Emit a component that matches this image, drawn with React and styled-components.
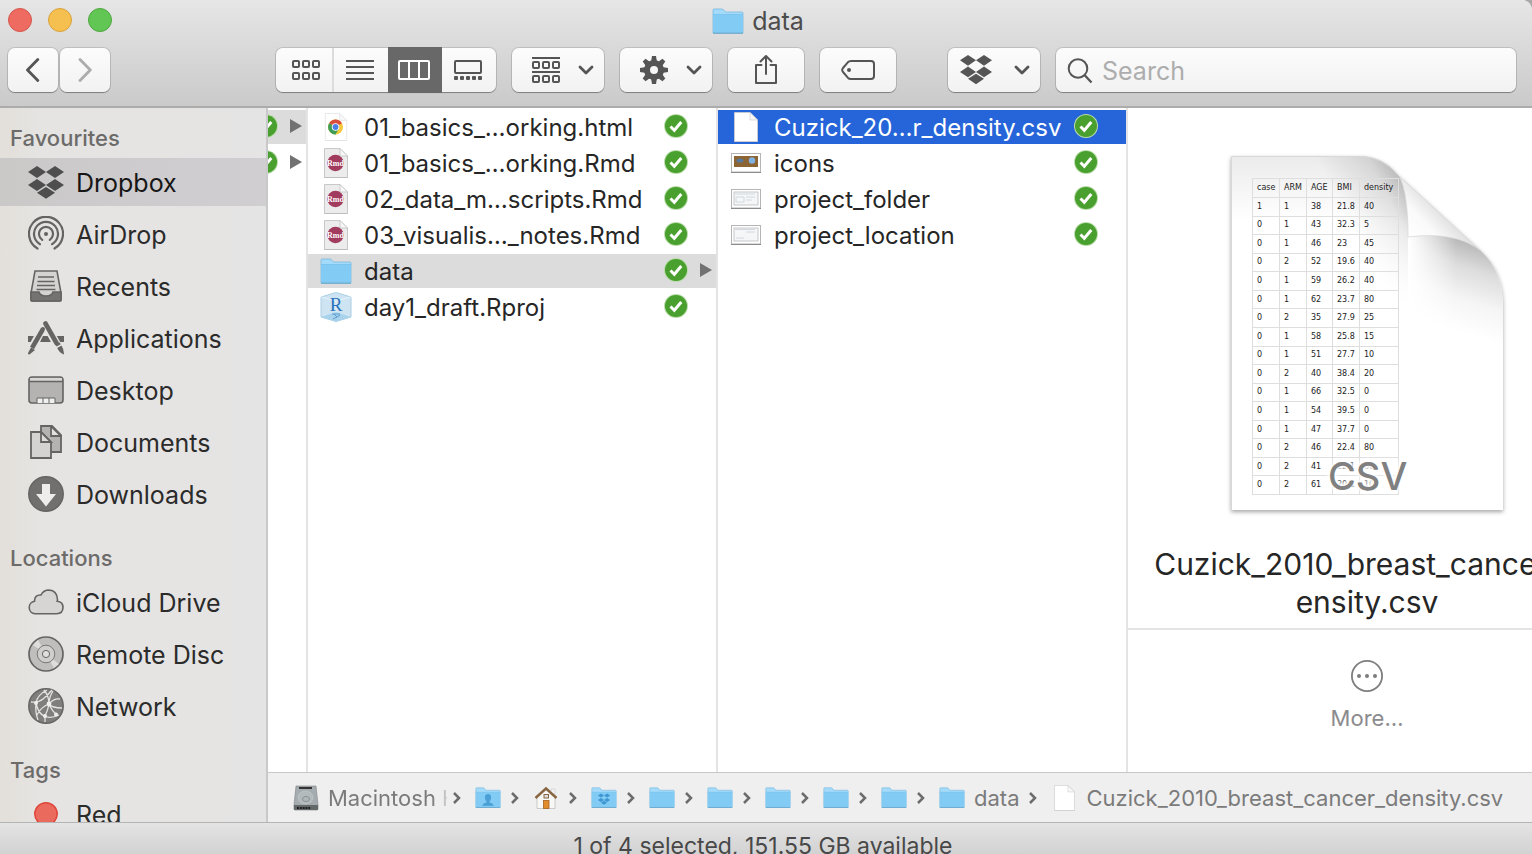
import React from "react";
import styled, { createGlobalStyle, css } from "styled-components";

const Global = createGlobalStyle`
  *, *::before, *::after { box-sizing: border-box; }
  body { margin: 0; background: #a9a9a9; }
  button, input { font: inherit; color: inherit; }
  button { border: 0; padding: 0; background: none; cursor: default; }
  ul, ol { list-style: none; margin: 0; padding: 0; }
  svg { display: block; flex: none; }
`;

/* ---------- window ---------- */
const Window = styled.div`
  display: flex;
  flex-direction: column;
  height: 100vh;
  overflow: hidden;
  border-top-right-radius: 10px;
  background: #fff;
  color: #262626;
  font: 400 25px/34px Inter, "Liberation Sans", sans-serif;
`;
const Toolbar = styled.header`
  flex: none;
  background: linear-gradient(#e6e6e6, #cacaca);
  border-bottom: 2px solid #acacac;
`;
const TitleRow = styled.div`
  display: grid;
  grid-template-columns: 1fr auto 1fr;
  align-items: center;
  height: 40px;
  padding: 0 24px 0 8px;
`;
const Lights = styled.div`
  display: flex;
  gap: 16px;
`;
const Light = styled.button`
  width: 24px;
  height: 24px;
  border-radius: 50%;
  background: ${(p) => p.$fill};
  border: 1px solid ${(p) => p.$edge};
`;
const Title = styled.h1`
  display: flex;
  align-items: center;
  gap: 8px;
  margin: 0;
  padding-top: 2px;
  font-size: 25px;
  font-weight: 400;
  color: #4c4c4c;
`;
const Controls = styled.div`
  display: flex;
  gap: 16px;
  padding: 8px 16px 14px 8px;
`;
const raised = css`
  height: 44px;
  border-radius: 7px;
  background: linear-gradient(#fcfcfc, #f2f2f2);
  box-shadow: 0 0 0 1px rgba(0, 0, 0, 0.12), 0 1px 1px rgba(0, 0, 0, 0.3);
`;
const NavPair = styled.div`
  display: flex;
  gap: 2px;
  margin-right: 150px;
`;
const ToolButton = styled.button`
  ${raised}
  display: flex;
  align-items: center;
  justify-content: ${(p) => (p.$menu ? "space-between" : "center")};
  flex: none;
  width: ${(p) => p.$width}px;
  padding: ${(p) => (p.$menu ? `0 10px 0 ${p.$menu}px` : "0")};
  color: ${(p) => (p.$dim ? "#acacac" : "#555")};
`;
const Segments = styled.div`
  ${raised}
  display: flex;
  flex: none;
`;
const Segment = styled.button`
  display: grid;
  place-items: center;
  width: ${(p) => (p.$first ? 58 : 54)}px;
  padding: ${(p) => (p.$first ? "0 0 0 4px" : "0 2px 0 0")};
  color: ${(p) => (p.$on ? "#fff" : "#555")};
  background: ${(p) => (p.$on ? "#686868" : "none")};
  border-right: ${(p) => (p.$first ? "2px solid #dcdcdc" : "0")};
  box-shadow: ${(p) => (p.$on ? "0 1px #686868, 0 -1px #686868" : "none")};
`;
const Spacer = styled.div`
  width: 20px;
  flex: none;
`;
const SearchBox = styled.label`
  ${raised}
  display: flex;
  flex: 1;
  min-width: 0;
  align-items: center;
  gap: 9px;
  padding: 2px 11px 0;
  color: #555;
`;
const SearchInput = styled.input`
  flex: 1;
  min-width: 0;
  border: 0;
  padding: 0;
  outline: 0;
  background: none;
  &::placeholder { color: #adadad; opacity: 1; }
`;

/* ---------- sidebar ---------- */
const Body = styled.div`
  display: flex;
  flex: 1;
  min-height: 0;
`;
const Sidebar = styled.nav`
  flex: none;
  width: 268px;
  padding-top: 10px;
  overflow: hidden;
  border-right: 2px solid #c9c9c9;
  background: linear-gradient(90deg, #e3dfda, #e5e4e2 40px, #e5e4e4);
`;
const Group = styled.section`
  margin-bottom: 20px;
`;
const GroupTitle = styled.h2`
  margin: 0;
  padding-left: 10px;
  font-size: 22px;
  line-height: 40px;
  font-weight: 500;
  color: #6c6b6a;
`;
const Places = styled.ul`
  display: flex;
  flex-direction: column;
  gap: 4px;
`;
const Place = styled.button`
  display: flex;
  align-items: center;
  gap: 12px;
  width: 100%;
  height: 48px;
  padding: 0 0 0 28px;
  text-align: left;
  color: ${(p) => (p.$on ? "#161616" : "#2b2b2b")};
  background: ${(p) => (p.$on ? "linear-gradient(90deg, #cac9c8, #d1ced2)" : "none")};
`;
const PlaceIcon = styled.span`
  display: grid;
  place-items: center;
  width: 36px;
  height: 36px;
  color: ${(p) => (p.$dark ? "#4f4e4e" : "#656463")};
`;
const PlaceName = styled.span`
  padding-top: 2px;
  white-space: nowrap;
`;

/* ---------- columns ---------- */
const Main = styled.main`
  display: flex;
  flex-direction: column;
  flex: 1;
  min-width: 0;
`;
const Browser = styled.div`
  display: flex;
  flex: 1;
  min-height: 0;
`;
const Column = styled.ul`
  display: flex;
  flex-direction: column;
  flex: none;
  gap: 2px;
  width: ${(p) => p.$width}px;
  padding-top: 2px;
  border-right: 2px solid #e4e4e4;
`;
const Entry = styled.button`
  display: flex;
  align-items: center;
  justify-content: flex-end;
  gap: 12px;
  width: 100%;
  height: 34px;
  padding: 0 4px 0 12px;
  overflow: hidden;
  text-align: left;
  color: ${(p) => (p.$tone === "active" ? "#fff" : "#262626")};
  background: ${(p) => ({ active: "#2565d9", path: "#dcdcdc" })[p.$tone] || "none"};
`;
const EntryIcon = styled.span`
  display: grid;
  place-items: center;
  flex: none;
  width: 32px;
`;
const EntryName = styled.span`
  flex: 1;
  min-width: 0;
  padding-top: 2px;
  font-size: 24px;
  white-space: nowrap;
`;
const Badge = styled.span`
  flex: none;
  padding-bottom: 2px;
`;
const ArrowSlot = styled.span`
  width: 12px;
  flex: none;
  padding-bottom: 2px;
`;

/* ---------- preview ---------- */
const Preview = styled.aside`
  flex: 1;
  min-width: 0;
  overflow: hidden;
`;
const PreviewPane = styled.div`
  display: flex;
  flex-direction: column;
  align-items: center;
  width: 478px;
`;
const Sheet = styled.figure`
  position: relative;
  width: 272px;
  height: 354px;
  margin: 48px 0 35px;
  padding: 22px 0 0 21px;
`;
const SheetArt = styled.svg`
  position: absolute;
  inset: 0;
  overflow: visible;
  filter: drop-shadow(0 2px 2px rgba(0, 0, 0, 0.35));
`;
const DataTable = styled.table`
  position: relative;
  width: 146px;
  height: 317px;
  table-layout: fixed;
  border-collapse: collapse;
  font: 400 8px/10px "DejaVu Sans", sans-serif;
  color: #222;
  th, td {
    padding: 0 0 0 4px;
    border: 1px solid #dedede;
    text-align: left;
    font-weight: 400;
  }
  th { height: 19px; }
`;
const Kind = styled.figcaption`
  position: absolute;
  left: 97px;
  bottom: 11px;
  font-size: 38px;
  line-height: 46px;
  font-weight: 500;
  color: #808080;
  text-shadow: 0 0 4px #fff, 0 0 4px #fff, 0 0 6px #fff, 0 0 6px #fff;
`;
const FileName = styled.h2`
  margin: 0;
  font-size: 30px;
  line-height: 38px;
  font-weight: 400;
  text-align: center;
  white-space: nowrap;
`;
const MoreSection = styled.div`
  display: flex;
  justify-content: center;
  width: 100%;
  margin-top: 7px;
  padding-top: 30px;
  border-top: 2px solid #e4e4e4;
`;
const MoreButton = styled.button`
  display: flex;
  flex-direction: column;
  align-items: center;
  gap: 12px;
  font-size: 22px;
  line-height: 28px;
  color: #8b8b8e;
`;

/* ---------- path and status bars ---------- */
const PathBar = styled.ol`
  display: flex;
  align-items: center;
  flex: none;
  height: 50px;
  padding-left: 25px;
  overflow: hidden;
  border-top: 1px solid #c8c8c8;
  background: #efefef;
  font-size: 22px;
  line-height: 28px;
  color: #7b7b7b;
`;
const Crumb = styled.li`
  display: flex;
  align-items: center;
  flex: none;
`;
const CrumbIcon = styled.span`
  display: grid;
  place-items: center;
  width: 26px;
`;
const CrumbName = styled.span`
  margin-left: 9px;
  white-space: nowrap;
  ${(p) =>
    p.$clip &&
    css`
      width: 119px;
      margin-right: -4px;
      overflow: hidden;
      mask-image: linear-gradient(90deg, #000 104px, transparent 124px);
    `}
`;
const CrumbArrow = styled.svg`
  margin: 0 14px 0 10px;
`;
const StatusBar = styled.footer`
  flex: none;
  height: 32px;
  padding-right: 6px;
  overflow: hidden;
  border-top: 1px solid #b4b4b4;
  background: linear-gradient(#e4e4e4, #d2d2d2);
  font-size: 23px;
  line-height: 46px;
  text-align: center;
  color: #484848;
`;

/* ---------- icons ---------- */
const Folder = ({ size = 32, children }) => (
  <svg width={size} height={(size * 26) / 32} viewBox="0 0 32 26">
    <path d="M1 25V2q0-1 1-1h8q1 0 1.600.7L13 3.500q.5.500 1.500.5H30q1 0 1 1v20z" fill="#a4dafa" stroke="#70b6dd" strokeWidth=".7" />
    <path d="M1 6.500h30V24q0 1-1 1H2q-1 0-1-1z" fill="#81cbf5" />
    <path d="M1 6.500h30" stroke="#6fbce9" strokeWidth=".6" />
    <path d="M1 25.200h30" stroke="#5a9fc6" strokeWidth=".9" />
    {children}
  </svg>
);
const Dropbox = ({ size, fill = "currentColor" }) => (
  <svg width={size} height={(size * 33) / 36} viewBox="0 0 36 33">
    <DropboxShape fill={fill} />
  </svg>
);
const DropboxShape = (props) => (
  <path d="M9 0l9 6-9 6-9-6zM27 0l9 6-9 6-9-6zM9 13l9 6-9 6-9-6zM27 13l9 6-9 6-9-6zM18 21l9 5.800-9 6-9-6z" stroke="none" {...props} />
);
const ChevronDown = () => (
  <svg width="16" height="10" viewBox="0 0 16 10" fill="none" stroke="currentColor" strokeWidth="2.800" strokeLinecap="round" strokeLinejoin="round">
    <path d="M2 2l6 6 6-6" />
  </svg>
);
const Back = () => (
  <svg width="14" height="24" viewBox="0 0 14 24" fill="none" stroke="currentColor" strokeWidth="2.800" strokeLinecap="round" strokeLinejoin="round">
    <path d="M11.800 1.500L1.500 12l10.300 10.500" />
  </svg>
);
const Forward = () => (
  <svg width="14" height="24" viewBox="0 0 14 24" fill="none" stroke="currentColor" strokeWidth="2.800" strokeLinecap="round" strokeLinejoin="round">
    <path d="M2 1.500L12.300 12 2 22.500" />
  </svg>
);
const Cells = ({ y }) => [1, 11, 21].map((x) => <rect key={x} x={x} y={y} width="6" height="6" rx="1" />);
const GridIcon = () => (
  <svg width="28" height="20" fill="none" stroke="currentColor" strokeWidth="2">
    <Cells y={1} />
    <Cells y={13} />
  </svg>
);
const ListIcon = () => (
  <svg width="28" height="20" stroke="currentColor" strokeWidth="2">
    <path d="M0 1h28M0 7h28M0 13h28M0 19h28" />
  </svg>
);
const ColumnsIcon = () => (
  <svg width="32" height="20" fill="none" stroke="currentColor" strokeWidth="2">
    <rect x="1" y="1" width="30" height="18" rx="1" />
    <path d="M11 1v18M21 1v18" />
  </svg>
);
const GalleryIcon = () => (
  <svg width="28" height="20" fill="none" stroke="currentColor" strokeWidth="2">
    <rect x="1" y="1" width="26" height="12" rx="1" />
    {[0, 6, 12, 18, 24].map((x) => (
      <rect key={x} x={x} y="16" width="4" height="4" rx="1" fill="currentColor" stroke="none" />
    ))}
  </svg>
);
const ArrangeIcon = () => (
  <svg width="28" height="26" fill="none" stroke="currentColor" strokeWidth="2">
    <path d="M0 1h28M0 15h28" />
    <Cells y={5} />
    <Cells y={19} />
  </svg>
);
const Gear = () => (
  <svg width="28" height="28" viewBox="-14 -14 28 28" fill="currentColor">
    {[0, 45, 90, 135].map((a) => (
      <path key={a} d="M-2-14h4l1 6v16l-1 6h-4l-1-6V-8z" transform={`rotate(${a})`} />
    ))}
    <circle r="10" />
    <circle r="4" fill="#f7f7f7" />
  </svg>
);
const Share = () => (
  <svg width="24" height="30" viewBox="0 0 24 30" fill="none" stroke="currentColor" strokeWidth="2" strokeLinecap="round" strokeLinejoin="round">
    <path d="M7.500 10H2v18h20V10h-5.500M12 19V1M6.500 6.500L12 1 17.500 6.500" />
  </svg>
);
const Tag = () => (
  <svg width="34" height="20" viewBox="0 0 34 20" fill="none" stroke="currentColor" strokeWidth="2">
    <path d="M10 1h20q3 0 3 3v12q0 3-3 3H10q-2 0-3.200-1.300L2 12q-1.600-2 0-4l4.800-5.700Q8 1 10 1z" />
    <circle cx="8" cy="10" r="2" fill="currentColor" stroke="none" />
  </svg>
);
const SearchIcon = () => (
  <svg width="26" height="26" viewBox="0 0 26 26" fill="none" stroke="currentColor" strokeWidth="2">
    <circle cx="11" cy="10.500" r="9.300" />
    <path d="M17.500 17l7 7.500" strokeWidth="2.300" />
  </svg>
);

const AirDrop = () => (
  <svg width="36" height="36" viewBox="0 0 36 36" fill="none" stroke="currentColor" strokeWidth="2.200" strokeLinecap="round">
    <path d="M9.500 32.500a17 17 0 1 1 17 0M12 28.200a12 12 0 1 1 12 0M14.200 23.800a7 7 0 1 1 7.600 0" />
    <circle cx="18" cy="18" r="2" fill="currentColor" stroke="none" />
  </svg>
);
const Recents = () => (
  <svg width="32" height="32" viewBox="0 0 32 32" fill="none" stroke="currentColor" strokeWidth="1.600">
    <path d="M5 1h22l4 22v7q0 1-1 1H2q-1 0-1-1v-7z" fill="#d4d3d2" />
    <path d="M1 22h8q1 4 7 4t7-4h8v8q0 1-1 1H2q-1 0-1-1z" fill="#747372" />
    <path d="M8 7h16M7.500 11.500h17M7 15.500h18M6.500 19.500h19" />
  </svg>
);
const Apps = () => (
  <svg width="36" height="34" viewBox="0 0 36 34">
    <path d="M0 15h9l-3 6H0zM14 15h7l3 6H12zM28 15h8v6h-5z" fill="currentColor" />
    <path d="M15.500 5.500L3.500 28" stroke="#e5e4e2" strokeWidth="8" />
    <path d="M15 8L4 27" stroke="currentColor" strokeWidth="4.500" />
    <path d="M3 26.500l4 2.400-5.500 4.600Q0 34 0 32z" fill="currentColor" />
    <path d="M17 2l15 27" stroke="#e5e4e2" strokeWidth="8" />
    <path d="M17.500 2.500l11 19.500" stroke="currentColor" strokeWidth="4.600" strokeLinecap="round" />
    <path d="M27.500 23.500l4-2.300 1.200 2-4 2.400zM29.200 27l4.300-2.400q2.600 4 2.500 9-4.500-1.500-6.800-6.600z" fill="currentColor" />
    <circle cx="15" cy="8" r="2" fill="currentColor" />
  </svg>
);
const Desktop = () => (
  <svg width="36" height="28" viewBox="0 0 36 28" fill="none" stroke="currentColor" strokeWidth="1.600">
    <rect x="1" y="1" width="34" height="26" rx="3" fill="#b4b3b2" />
    <path d="M2 2h32v3H2z" fill="#d8d7d6" stroke="none" />
    <path d="M1 5.500h34" />
    <path d="M9 27v-5h18v5" fill="#f0f0f0" strokeWidth="1" />
    <path d="M15 22v5M21 22v5" strokeWidth="1" />
  </svg>
);
const Documents = () => (
  <svg width="32" height="34" viewBox="0 0 32 34" fill="none" stroke="currentColor" strokeWidth="1.800">
    <path d="M11 1h11l9 9v17H11z" fill="#b4b3b2" />
    <path d="M21 1v10h10z" fill="#e2e1e0" />
    <path d="M1 7h10l10 10v16H1z" fill="#d4d3d1" />
    <path d="M11 7v10h10z" fill="#dddcda" />
  </svg>
);
const Downloads = () => (
  <svg width="36" height="36" viewBox="0 0 36 36">
    <circle cx="18" cy="18" r="17.200" fill="#72706e" stroke="currentColor" strokeWidth="1.500" />
    <path d="M14 8h8v10h6L18 30.500 8 18h6z" fill="#eeedeb" />
  </svg>
);
const Cloud = () => (
  <svg width="36" height="26" viewBox="0 0 36 26">
    <path d="M7 24.800a6.300 6.300 0 0 1-.5-12.500Q6.500 5.500 13 6 15.500 1 21 1q8 .5 8.500 9.500 0 1-.3 1.800 5.800.5 5.800 6.200 0 6-6.500 6.300z" fill="#d6d5d3" stroke="currentColor" strokeWidth="1.600" />
  </svg>
);
const Disc = () => (
  <svg width="36" height="36" viewBox="0 0 36 36" fill="none" stroke="currentColor">
    <circle cx="18" cy="18" r="17" fill="#bfbebc" strokeWidth="1.700" />
    <path d="M18 18L5 9l5-5zM18 18l8 14 5-4z" fill="#dedddb" stroke="none" />
    <circle cx="18" cy="18" r="8.800" fill="#cfcecc" strokeWidth=".8" />
    <circle cx="18" cy="18" r="3.600" fill="#e0dfdd" />
  </svg>
);
const Network = () => (
  <svg width="36" height="36" viewBox="0 0 36 36" fill="none">
    <circle cx="18" cy="18" r="17.200" fill="#7f7e7d" stroke="#666563" strokeWidth="1.500" />
    <g stroke="#e4e3e1" strokeWidth="1.300">
      <path d="M3 14q7 1 12-3t9-9M8 15Q9 7 19 2M8 15q-1 9 2 17M8 15q2 10 8 13t15-1M21 16Q13 19 9 27M21 16q5-6 11-5M21 16q0-7 4-13M21 16q0-8-5-14M21 16q3 7 8 11M21 16q3 4 13 4M17 28v6M17 28q3-6 4-12" />
    </g>
    <g fill="#efeeec">
      <circle cx="8" cy="15" r="2" />
      <circle cx="21" cy="16" r="2.400" />
      <circle cx="17" cy="28" r="2" />
      <circle cx="28" cy="26.500" r="2" />
    </g>
  </svg>
);
const RedDot = () => (
  <svg width="24" height="24">
    <circle cx="12" cy="12" r="11.200" fill="#eb6a5e" stroke="#e0453a" strokeWidth="1.500" />
  </svg>
);

const Check = () => (
  <svg width="24" height="24" viewBox="0 0 24 24">
    <circle cx="12" cy="12" r="12" fill="#b9dcaa" />
    <circle cx="12" cy="12" r="11" fill="#49a02f" />
    <path d="M6.500 12.500l3.800 3.800 7-8.300" fill="none" stroke="#fff" strokeWidth="2.900" />
  </svg>
);
const Triangle = () => (
  <svg width="12" height="14">
    <path d="M0 0l12 7-12 7z" fill="#727272" />
  </svg>
);
const Page = ({ width = 24, height = 30, fill = "#fff", edge = "#cfcfcf", children }) => (
  <svg width={width} height={height} viewBox="0 0 24 30">
    <path d="M.5.500H16L23.500 8v21.500H.5z" fill={fill} stroke={edge} strokeWidth=".8" />
    <path d="M16 .5V8h7.500z" fill="#f8f8f8" stroke={edge} strokeWidth=".7" />
    <path d="M.5 29.500h23" stroke={edge} />
    {children}
  </svg>
);
const ChromePage = () => (
  <Page height={28} edge="#e2e2e2">
    <g transform="translate(11.500 15)">
      <circle r="8" fill="#f4c93c" />
      <path d="M0 0L-6.900-4A8 8 0 0 1 6.900-4z" fill="#d94b3c" />
      <path d="M0 0L-6.900-4A8 8 0 0 0 0 8l3.500-6z" fill="#3f9d57" />
      <circle r="4" fill="#fff" />
      <circle r="3.100" fill="#4a80e8" />
    </g>
  </Page>
);
const RmdPage = () => (
  <Page fill="#ececec" edge="#bdbdbd">
    <circle cx="11.500" cy="15" r="8.300" fill="#a23c5f" />
    <text x="11.500" y="17.500" textAnchor="middle" fontFamily="Liberation Serif, serif" fontWeight="700" fontSize="8" fill="#fff">Rmd</text>
  </Page>
);
const RProject = () => (
  <svg width="32" height="30" viewBox="0 0 32 30">
    <path d="M1 5l15-4.500L31 5v20l-15 4.500L1 25z" fill="#cfe4f2" stroke="#a9cfe4" />
    <path d="M1 5l15 4 15-4M16 9v20" fill="none" stroke="#e8f3f9" />
    <path d="M16 20l15 5-15 4.500L1 25z" fill="#a9d3ec" />
    <text x="16" y="19" textAnchor="middle" fontFamily="Liberation Serif, serif" fontSize="19" fill="#2d74bd">R</text>
    <path d="M12 22h8M14 22l3 3 3-2M13 27l4-2" fill="none" stroke="#5a9bd0" />
  </svg>
);
const Thumb = ({ kind }) => (
  <svg width="30" height="20" viewBox="0 0 30 20">
    <rect x=".5" y=".5" width="29" height="18.500" fill="#fff" stroke="#b5b5b5" />
    <path d="M0 19.500h30" stroke="#8c8c8c" />
    {kind === "wood" ? (
      <g>
        <rect x="3" y="3" width="24" height="11" fill="#8d6534" />
        <ellipse cx="9" cy="7.500" rx="3.500" ry="2" fill="#56789a" />
        <circle cx="21" cy="7.500" r="3.200" fill="#7fb2e2" />
      </g>
    ) : (
      <g>
        <rect x="3" y="3" width="24" height="13" fill="#f5f6f7" stroke="#b9bcbf" strokeWidth=".8" />
        <path d={kind === "folder" ? "M4 5h20M5 8h8v5H5zM15 8h9M15 11h6" : "M4 4.500h20M15 7h9M5 13h8"} fill="none" stroke="#d3d8de" />
      </g>
    )}
  </svg>
);
const Drive = () => (
  <svg width="26" height="26" viewBox="0 0 26 26">
    <path d="M3 1h20l2 19v4q0 1-1 1H2q-1 0-1-1v-4z" fill="#a5acaf" stroke="#7d8385" strokeWidth=".6" />
    <path d="M1 20h24v4q0 1-1 1H2q-1 0-1-1z" fill="#636869" />
    <path d="M6 3h13" stroke="#333" strokeWidth="2" />
    <ellipse cx="12.500" cy="12.500" rx="7.500" ry="6.500" fill="#b4babc" stroke="#c2c8ca" strokeWidth=".7" />
    <ellipse cx="13" cy="14" rx="3.500" ry="2.600" fill="#b0b7b9" stroke="#8b9294" />
    <path d="M4 23h14" stroke="#1f2122" strokeWidth="2" strokeDasharray="2 .8" />
  </svg>
);
const House = () => (
  <svg width="24" height="24" viewBox="0 0 24 24">
    <path d="M17 3h4v8h-4z" fill="#f2f2f2" stroke="#c6c6c6" strokeWidth=".6" />
    <path d="M3 10l9-8 9 8v12.500H3z" fill="#f7f7f5" stroke="#b9b9b7" strokeWidth=".7" />
    <path d="M1.500 12L12 2.500 22.500 12" fill="none" stroke="#8a6744" strokeWidth="2.500" />
    <rect x="10" y="8.500" width="4.500" height="3.500" fill="#ddd" stroke="#8a6744" />
    <rect x="9.500" y="14.500" width="5.500" height="8" fill="#e28b2d" stroke="#a86020" strokeWidth=".8" />
  </svg>
);
const PersonFolder = () => (
  <Folder size={26}>
    <path d="M16 8.500q3.800 0 3.800 4.500 0 3-2 4.500v1.500q4.700 1 5.200 4H9q.5-3 5.200-4v-1.500q-2-1.500-2-4.500 0-4.500 3.800-4.500z" fill="#4a9fd5" />
  </Folder>
);
const DropboxFolder = () => (
  <Folder size={26}>
    <g transform="translate(8.500 8) scale(.42)">
      <DropboxShape fill="#3f97d2" />
    </g>
  </Folder>
);
const MoreIcon = () => (
  <svg width="32" height="32" fill="#7d7d7d">
    <circle cx="16" cy="16" r="15.100" fill="none" stroke="#7d7d7d" strokeWidth="1.800" />
    <circle cx="8" cy="16" r="2" />
    <circle cx="16" cy="16" r="2" />
    <circle cx="24" cy="16" r="2" />
  </svg>
);

/* ---------- data ---------- */
const places = [
  ["Favourites", [
    ["Dropbox", <Dropbox size={36} />],
    ["AirDrop", <AirDrop />],
    ["Recents", <Recents />],
    ["Applications", <Apps />],
    ["Desktop", <Desktop />],
    ["Documents", <Documents />],
    ["Downloads", <Downloads />],
  ]],
  ["Locations", [
    ["iCloud Drive", <Cloud />],
    ["Remote Disc", <Disc />],
    ["Network", <Network />],
  ]],
  ["Tags", [["Red", <RedDot />]]],
];
const parentColumn = [
  { label: "Selected parent folder", tone: "path", open: true },
  { label: "Parent folder", open: true },
];
const folderColumn = [
  { name: "01_basics_…orking.html", icon: <ChromePage /> },
  { name: "01_basics_…orking.Rmd", icon: <RmdPage /> },
  { name: "02_data_m…scripts.Rmd", icon: <RmdPage /> },
  { name: "03_visualis…_notes.Rmd", icon: <RmdPage /> },
  { name: "data", icon: <Folder />, tone: "path", open: true },
  { name: "day1_draft.Rproj", icon: <RProject /> },
];
const dataColumn = [
  { name: "Cuzick_20…r_density.csv", icon: <Page />, tone: "active" },
  { name: "icons", icon: <Thumb kind="wood" /> },
  { name: "project_folder", icon: <Thumb kind="folder" /> },
  { name: "project_location", icon: <Thumb kind="location" /> },
];
const csvRows = [
  [1, 1, 38, "21.8", 40], [0, 1, 43, "32.3", 5], [0, 1, 46, "23", 45], [0, 2, 52, "19.6", 40],
  [0, 1, 59, "26.2", 40], [0, 1, 62, "23.7", 80], [0, 2, 35, "27.9", 25], [0, 1, 58, "25.8", 15],
  [0, 1, 51, "27.7", 10], [0, 2, 40, "38.4", 20], [0, 1, 66, "32.5", 0], [0, 1, 54, "39.5", 0],
  [0, 1, 47, "37.7", 0], [0, 2, 46, "22.4", 80], [0, 2, 41, "22.1", 80], [0, 2, 61, "20.1", 10],
];
const crumbs = [
  { name: "Macintosh HD", icon: <Drive />, clip: true },
  { icon: <PersonFolder /> },
  { icon: <House /> },
  { icon: <DropboxFolder /> },
  { icon: <Folder size={26} /> },
  { icon: <Folder size={26} /> },
  { icon: <Folder size={26} /> },
  { icon: <Folder size={26} /> },
  { icon: <Folder size={26} /> },
  { name: "data", icon: <Folder size={26} /> },
  { name: "Cuzick_2010_breast_cancer_density.csv", icon: <Page width={21} height={26} /> },
];

const FileColumn = ({ width, entries }) => (
  <Column $width={width}>
    {entries.map((e, i) => (
      <li key={i}>
        <Entry $tone={e.tone} aria-label={e.label}>
          {e.icon && <EntryIcon>{e.icon}</EntryIcon>}
          {e.name && <EntryName>{e.name}</EntryName>}
          <Badge><Check /></Badge>
          <ArrowSlot>{e.open && <Triangle />}</ArrowSlot>
        </Entry>
      </li>
    ))}
  </Column>
);

const CsvSheet = () => (
  <Sheet>
    <SheetArt width="272" height="354" viewBox="0 0 272 354">
      <defs>
        <linearGradient id="top" x1="0" y1="0" x2="0" y2="1">
          <stop offset="0" stopColor="#ebebeb" />
          <stop offset=".18" stopColor="#fff" />
        </linearGradient>
        <linearGradient id="bend" gradientUnits="userSpaceOnUse" x1="178" y1="40" x2="120" y2="70">
          <stop offset="0" stopColor="#000" stopOpacity=".22" />
          <stop offset=".3" stopColor="#000" stopOpacity=".1" />
          <stop offset="1" stopColor="#000" stopOpacity="0" />
        </linearGradient>
        <linearGradient id="bendFade" gradientUnits="userSpaceOnUse" x1="0" y1="60" x2="0" y2="150">
          <stop offset="0" stopColor="#fff" />
          <stop offset="1" stopColor="#000" />
        </linearGradient>
        <linearGradient id="under" gradientUnits="userSpaceOnUse" x1="240" y1="84" x2="212" y2="170">
          <stop offset="0" stopColor="#b4b4b4" />
          <stop offset=".3" stopColor="#dcdcdc" />
          <stop offset=".65" stopColor="#f5f5f5" />
          <stop offset="1" stopColor="#fff" />
        </linearGradient>
        <linearGradient id="underFade" gradientUnits="userSpaceOnUse" x1="177" y1="0" x2="225" y2="0">
          <stop offset="0" stopColor="#000" />
          <stop offset="1" stopColor="#fff" />
        </linearGradient>
        <linearGradient id="flap" gradientUnits="userSpaceOnUse" x1="212" y1="54" x2="180" y2="84">
          <stop offset="0" stopColor="#dedede" />
          <stop offset=".5" stopColor="#fafafa" />
          <stop offset="1" stopColor="#fff" />
        </linearGradient>
        <mask id="bendMask">
          <rect width="272" height="354" fill="url(#bendFade)" />
        </mask>
        <mask id="underMask">
          <rect width="272" height="354" fill="url(#underFade)" />
        </mask>
      </defs>
      <path d="M0 0H128Q152 0 168 20L250 95Q272 115 272 150V354H0z" fill="url(#top)" />
      <path d="M0 0H128Q152 0 168 20Q177 35 177 81V170H0z" fill="url(#bend)" mask="url(#bendMask)" />
      <path d="M177 81Q225 75 250 95Q272 115 272 150V200H177z" fill="url(#under)" mask="url(#underMask)" />
      <path d="M168 20Q177 35 177 81Q225 75 250 95z" fill="url(#flap)" stroke="#d2d2d2" strokeWidth=".7" />
      <path d="M.5 354V.5H128Q152 0 168 20" fill="none" stroke="#d8d8d8" />
    </SheetArt>
    <DataTable>
      <colgroup>
        {[27, 27, 26, 27, 39].map((w, i) => <col key={i} width={w} />)}
      </colgroup>
      <thead>
        <tr>{["case", "ARM", "AGE", "BMI", "density"].map((h) => <th key={h}>{h}</th>)}</tr>
      </thead>
      <tbody>
        {csvRows.map((r, i) => (
          <tr key={i}>{r.map((c, j) => <td key={j}>{c}</td>)}</tr>
        ))}
      </tbody>
    </DataTable>
    <Kind>CSV</Kind>
  </Sheet>
);

export default function App() {
  return (
    <>
      <Global />
      <Window>
        <Toolbar>
          <TitleRow>
            <Lights>
              <Light aria-label="Close" $fill="#ed6b60" $edge="#d9554b" />
              <Light aria-label="Minimise" $fill="#f5c04f" $edge="#d9a23b" />
              <Light aria-label="Zoom" $fill="#62c655" $edge="#4fa73f" />
            </Lights>
            <Title><Folder />data</Title>
          </TitleRow>
          <Controls>
            <NavPair>
              <ToolButton $width={50} aria-label="Back"><Back /></ToolButton>
              <ToolButton $width={50} $dim aria-label="Forward"><Forward /></ToolButton>
            </NavPair>
            <Segments>
              <Segment $first aria-label="Icon view"><GridIcon /></Segment>
              <Segment aria-label="List view"><ListIcon /></Segment>
              <Segment $on aria-label="Column view" aria-pressed="true"><ColumnsIcon /></Segment>
              <Segment aria-label="Gallery view"><GalleryIcon /></Segment>
            </Segments>
            <ToolButton $width={92} $menu={20} aria-label="Arrange"><ArrangeIcon /><ChevronDown /></ToolButton>
            <ToolButton $width={92} $menu={20} aria-label="Actions"><Gear /><ChevronDown /></ToolButton>
            <ToolButton $width={76} aria-label="Share"><Share /></ToolButton>
            <ToolButton $width={76} aria-label="Tags"><Tag /></ToolButton>
            <Spacer />
            <ToolButton $width={92} $menu={12} aria-label="Dropbox"><Dropbox size={32} /><ChevronDown /></ToolButton>
            <SearchBox>
              <SearchIcon />
              <SearchInput type="search" placeholder="Search" aria-label="Search" />
            </SearchBox>
          </Controls>
        </Toolbar>
        <Body>
          <Sidebar>
            {places.map(([title, items]) => (
              <Group key={title}>
                <GroupTitle>{title}</GroupTitle>
                <Places>
                  {items.map(([name, icon]) => (
                    <li key={name}>
                      <Place $on={name === "Dropbox"}>
                        <PlaceIcon $dark={name === "Dropbox"}>{icon}</PlaceIcon>
                        <PlaceName>{name}</PlaceName>
                      </Place>
                    </li>
                  ))}
                </Places>
              </Group>
            ))}
          </Sidebar>
          <Main>
            <Browser>
              <FileColumn width={40} entries={parentColumn} />
              <FileColumn width={410} entries={folderColumn} />
              <FileColumn width={410} entries={dataColumn} />
              <Preview>
                <PreviewPane>
                  <CsvSheet />
                  <FileName>Cuzick_2010_breast_cancer_d<br />ensity.csv</FileName>
                  <MoreSection>
                    <MoreButton><MoreIcon />More…</MoreButton>
                  </MoreSection>
                </PreviewPane>
              </Preview>
            </Browser>
            <PathBar>
              {crumbs.map((c, i) => (
                <Crumb key={i}>
                  <CrumbIcon>{c.icon}</CrumbIcon>
                  {c.name && <CrumbName $clip={c.clip}>{c.name}</CrumbName>}
                  {i < crumbs.length - 1 && (
                    <CrumbArrow width="8" height="12" fill="none" stroke="#6c6c6c" strokeWidth="2.500">
                      <path d="M1 1l5 5-5 5" />
                    </CrumbArrow>
                  )}
                </Crumb>
              ))}
            </PathBar>
          </Main>
        </Body>
        <StatusBar>1 of 4 selected, 151.55 GB available</StatusBar>
      </Window>
    </>
  );
}
